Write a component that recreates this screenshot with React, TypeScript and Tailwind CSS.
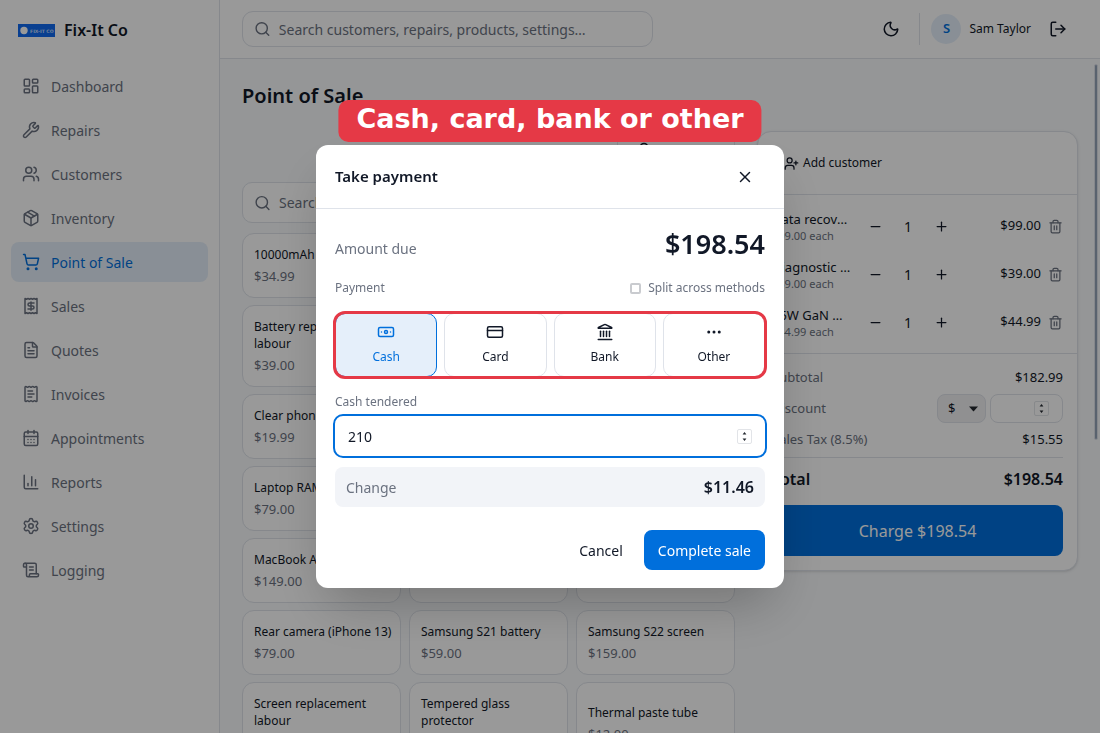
import React, { useState } from 'react';
import {
    Banknote,
    CalendarDays,
    ChartColumn,
    CreditCard,
    Ellipsis,
    FileText,
    Landmark,
    LayoutDashboard,
    Lock,
    LogOut,
    LucideIcon,
    Minus,
    Moon,
    Package,
    Plus,
    Receipt,
    ReceiptText,
    ScrollText,
    Search,
    Settings,
    ShoppingCart,
    Trash2,
    UserPlus,
    Users,
    Wrench,
    X,
} from 'lucide-react';

interface NavItem {
    title: string;
    icon: LucideIcon;
}

interface Product {
    name: string;
    price: string;
}

const navItems: NavItem[] = [
    { title: 'Dashboard', icon: LayoutDashboard },
    { title: 'Repairs', icon: Wrench },
    { title: 'Customers', icon: Users },
    { title: 'Inventory', icon: Package },
    { title: 'Point of Sale', icon: ShoppingCart },
    { title: 'Sales', icon: Receipt },
    { title: 'Quotes', icon: FileText },
    { title: 'Invoices', icon: ReceiptText },
    { title: 'Appointments', icon: CalendarDays },
    { title: 'Reports', icon: ChartColumn },
    { title: 'Settings', icon: Settings },
    { title: 'Logging', icon: ScrollText },
];

const products: Product[] = [
    { name: '10000mAh bank', price: '$34.99' },
    { name: '20W charger', price: '$19.99' },
    { name: '65W charger', price: '$44.99' },
    { name: 'Battery replacement labour', price: '$39.00' },
    { name: 'Bluetooth earbuds', price: '$49.00' },
    { name: 'Charge port', price: '$29.00' },
    { name: 'Clear phone case', price: '$19.99' },
    { name: 'Data recovery', price: '$99.00' },
    { name: 'Diagnostic fee', price: '$39.00' },
    { name: 'Laptop RAM 16GB', price: '$79.00' },
    { name: 'Laptop SSD 1TB', price: '$109.00' },
    { name: 'Lightning cable', price: '$14.99' },
    { name: 'MacBook Air battery', price: '$149.00' },
    { name: 'Pixel 7 screen', price: '$129.00' },
    { name: 'Pixel battery', price: '$59.00' },
    { name: 'Rear camera (iPhone 13)', price: '$79.00' },
    { name: 'Samsung S21 battery', price: '$59.00' },
    { name: 'Samsung S22 screen', price: '$159.00' },
    { name: 'Screen replacement labour', price: '$59.00' },
    { name: 'Tempered glass protector', price: '$14.99' },
    { name: 'Thermal paste tube', price: '$12.00' },
];

const cartItems: Product[] = [
    { name: 'Data recovery', price: '$99.00' },
    { name: 'Diagnostic fee', price: '$39.00' },
    { name: '65W GaN USB-C charger', price: '$44.99' },
];

const methods: NavItem[] = [
    { title: 'Cash', icon: Banknote },
    { title: 'Card', icon: CreditCard },
    { title: 'Bank', icon: Landmark },
    { title: 'Other', icon: Ellipsis },
];

const Stepper: React.FC = () => (
    <span className="flex h-[15px] w-[15px] shrink-0 items-center justify-center rounded-[2px] border border-[#e2e4e8]">
        <svg width="5" height="11" viewBox="0 0 5 11" fill="#23282f" aria-hidden="true">
            <path d="M2.5 1 4.4 3.4H.6ZM2.5 10 .6 7.6h3.8Z" />
        </svg>
    </span>
);

const Logo: React.FC = () => (
    <svg width="37" height="13" viewBox="0 0 37 13" role="img" aria-label="Fix-It Co logo">
        <rect width="37" height="13" fill="#0f6af0" />
        <circle cx="6" cy="6.5" r="3.7" fill="#fff" />
        <text x="12" y="8.5" fontSize="4.6" fontWeight="700" fill="#c4dcfd" fontFamily="DejaVu Sans, sans-serif">
            FIX-IT CO
        </text>
    </svg>
);

const Sidebar: React.FC = () => (
    <aside className="w-[220px] shrink-0 border-r border-[#dfe3ea] bg-white">
        <div className="flex h-[58px] items-center gap-[9px] px-[18px] pt-[2px]">
            <Logo />
            <span className="text-[16px] font-semibold">Fix-It Co</span>
        </div>
        <nav className="flex flex-col gap-1 px-[11px] pt-2">
            {navItems.map((item) => (
                <a
                    key={item.title}
                    href="#"
                    className={
                        item.title === 'Point of Sale'
                            ? 'flex h-10 items-center gap-[11px] rounded-lg bg-[#e5effa] px-[11px] text-[14px] text-[#006fdc]'
                            : 'flex h-10 items-center gap-[11px] rounded-lg px-[11px] text-[14px] text-[#6b7280]'
                    }
                >
                    <item.icon size={18} />
                    {item.title}
                </a>
            ))}
        </nav>
    </aside>
);

const Header: React.FC = () => (
    <header className="flex h-[59px] shrink-0 items-center justify-between border-b border-[#dfe3ea] bg-white px-[22px]">
        <label className="flex h-9 w-[411px] items-center gap-2 rounded-[11px] border border-[#dfe3ea] px-[11px] text-[#6b7280]">
            <Search size={18} />
            <input
                type="search"
                aria-label="Search everything"
                placeholder="Search customers, repairs, products, settings…"
                className="w-full bg-transparent text-[14px] outline-none placeholder:text-[#6b7280]"
            />
        </label>
        <div className="flex items-center">
            <button type="button" aria-label="Dark mode" className="px-[19px]">
                <Moon size={18} />
            </button>
            <div className="flex items-center gap-2 border-l border-[#dfe3ea] py-[1px] pl-[11px]">
                <span className="flex h-[30px] w-[30px] items-center justify-center rounded-full bg-[#e5effa] text-[13px] font-semibold text-[#006fdc]">
                    S
                </span>
                <span className="text-[12px]">Sam Taylor</span>
            </div>
            <button type="button" aria-label="Sign out" className="pr-[11px] pl-[18px]">
                <LogOut size={18} />
            </button>
        </div>
    </header>
);

const Cart: React.FC = () => (
    <section className="mt-[14px] w-[321px] shrink-0 self-start rounded-[14px] border border-[#dfe3ea] bg-white shadow-sm">
        <div className="flex h-[63px] items-center border-b border-[#dfe3ea] px-[14px]">
            <button type="button" className="flex items-center gap-1 px-3 text-[12px]">
                <UserPlus size={15} />
                Add customer
            </button>
        </div>
        <ul className="flex flex-col gap-2 border-b border-[#dfe3ea] px-[14px] py-[11px]">
            {cartItems.map((item) => (
                <li key={item.name} className="flex h-10 items-center">
                    <div className="w-[79px] pt-[2px]">
                        <p className="truncate text-[13px] leading-[17px]">{item.name}</p>
                        <p className="text-[11px] leading-4 text-[#6b7280]">{item.price} each</p>
                    </div>
                    <div className="ml-[9px] flex items-center">
                        <button type="button" aria-label={`Less ${item.name}`} className="flex w-[30px] justify-center">
                            <Minus size={15} />
                        </button>
                        <span className="w-9 text-center text-[14px]">1</span>
                        <button type="button" aria-label={`More ${item.name}`} className="flex w-[30px] justify-center">
                            <Plus size={15} />
                        </button>
                    </div>
                    <span className="ml-auto text-[13px]">{item.price}</span>
                    <button type="button" aria-label={`Remove ${item.name}`} className="ml-[7px] text-[#6b7280]">
                        <Trash2 size={15} />
                    </button>
                </li>
            ))}
        </ul>
        <div className="flex flex-col px-[14px] pt-[14px] pb-[14px] text-[13px]">
            <div className="flex h-5 items-center justify-between">
                <span className="text-[#6b7280]">Subtotal</span>
                <span>$182.99</span>
            </div>
            <div className="mt-[6px] mb-[7px] flex items-center gap-1">
                <label htmlFor="discount" className="mr-auto text-[#6b7280]">
                    Discount
                </label>
                <div className="relative">
                    <select
                        aria-label="Discount type"
                        className="h-[29px] w-[49px] appearance-none rounded-lg border border-[#dfe3ea] bg-[#f1f1f2] pl-[10px]"
                    >
                        <option>$</option>
                        <option>%</option>
                    </select>
                    <svg className="pointer-events-none absolute top-3 right-2" width="9" height="6" viewBox="0 0 9 6">
                        <path d="M0 .5h9L4.500 5.500Z" fill="#23282f" />
                    </svg>
                </div>
                <div className="flex h-[29px] w-[73px] items-center rounded-lg border border-[#dfe3ea] pr-[13px] pl-2">
                    <input id="discount" type="text" inputMode="decimal" className="w-full min-w-0 bg-transparent outline-none" />
                    <Stepper />
                </div>
            </div>
            <div className="flex h-5 items-center justify-between">
                <span className="text-[#6b7280]">Sales Tax (8.5%)</span>
                <span>$15.55</span>
            </div>
            <div className="mt-[7px] flex h-12 items-center justify-between border-t border-[#dfe3ea] pb-[6px] text-[16px] font-semibold">
                <span>Total</span>
                <span>$198.54</span>
            </div>
            <button type="button" className="h-[51px] rounded-lg bg-[#006fdc] text-[16px] text-white">
                Charge $198.54
            </button>
        </div>
    </section>
);

const PaymentDialog: React.FC = () => {
    const [method, setMethod] = useState('Cash');
    const [tendered, setTendered] = useState('210');

    return (
        <div className="fixed inset-0 flex items-center justify-center bg-black/40">
            <div
                role="dialog"
                aria-label="Take payment"
                className="relative w-[468px] rounded-xl bg-white shadow-2xl"
            >
                <div className="absolute -top-[45px] left-1/2 flex h-[42px] -translate-x-1/2 items-center rounded-[10px] bg-[#e53946] px-[18px] pb-1 font-['DejaVu_Sans',sans-serif] text-[27px] font-bold whitespace-nowrap text-white">
                    Cash, card, bank or other
                </div>
                <div className="flex h-16 items-center justify-between border-b border-[#dfe3ea] px-[19px]">
                    <h2 className="text-[15px] font-semibold">Take payment</h2>
                    <button type="button" aria-label="Close" className="px-[11px]">
                        <X size={18} />
                    </button>
                </div>
                <div className="px-[19px] pt-[18px] pb-[18px]">
                    <div className="flex h-9 items-end justify-between">
                        <span className="text-[14px] leading-[28px] text-[#6b7280]">Amount due</span>
                        <span className="text-[27px] leading-[38px] font-semibold">$198.54</span>
                    </div>
                    <div className="mt-[15px] flex h-5 items-center justify-between text-[12px] text-[#6b7280]">
                        <span>Payment</span>
                        <label className="flex items-center gap-[7px]">
                            <input
                                type="checkbox"
                                className="h-[11px] w-[11px] appearance-none rounded-[2px] border-2 border-[#c9cbcf] checked:bg-[#006fdc]"
                            />
                            Split across methods
                        </label>
                    </div>
                    <div className="mt-[15px] grid grid-cols-4 gap-[7px] rounded-[10px] outline-[3px] -outline-offset-1 outline-[#e53946]">
                        {methods.map((item) => (
                            <button
                                key={item.title}
                                type="button"
                                onClick={() => setMethod(item.title)}
                                className={
                                    method === item.title
                                        ? 'flex h-16 flex-col items-center justify-center gap-[7px] rounded-[10px] border border-[#006fdc] bg-[#e5effa] pb-px text-[12px] leading-[18px] text-[#006fdc]'
                                        : 'flex h-16 flex-col items-center justify-center gap-[7px] rounded-[10px] border border-[#dfe3ea] pb-px text-[12px] leading-[18px]'
                                }
                            >
                                <item.icon size={18} />
                                {item.title}
                            </button>
                        ))}
                    </div>
                    <label htmlFor="tendered" className="mt-4 block text-[12px] leading-[18px] text-[#6b7280]">
                        Cash tendered
                    </label>
                    <div className="-mx-[2px] mt-[3px] flex h-11 items-center rounded-[10px] border-2 border-[#006fdc] px-[13px]">
                        <input
                            id="tendered"
                            type="text"
                            inputMode="decimal"
                            value={tendered}
                            onChange={(e) => setTendered(e.target.value)}
                            className="w-full bg-transparent text-[14px] outline-none"
                        />
                        <Stepper />
                    </div>
                    <div className="mt-[9px] flex h-10 items-center justify-between rounded-lg bg-[#f2f4f8] px-[11px]">
                        <span className="text-[14px] text-[#6b7280]">Change</span>
                        <span className="text-[16px] font-semibold">$11.46</span>
                    </div>
                    <div className="mt-[23px] flex h-10 justify-end gap-[7px] text-[14px]">
                        <button type="button" className="px-[14px]">
                            Cancel
                        </button>
                        <button type="button" className="rounded-lg bg-[#006fdc] px-[14px] text-white">
                            Complete sale
                        </button>
                    </div>
                </div>
            </div>
        </div>
    );
};

const App: React.FC = () => (
    <div className="flex h-screen overflow-hidden bg-[#f8fafc] font-['Noto_Sans',sans-serif] text-[#111827]">
        <Sidebar />
        <div className="relative flex min-w-0 flex-1 flex-col">
            <Header />
            <main className="flex-1 overflow-hidden px-[22px] pt-[22px]">
                <h1 className="h-9 text-[20px] leading-[30px] font-semibold">Point of Sale</h1>
                <div className="flex gap-[22px]">
                    <div className="min-w-0 flex-1 pt-[14px]">
                        <div className="flex justify-end">
                            <button
                                type="button"
                                className="flex h-10 w-[118px] items-center justify-center gap-2 rounded-lg border border-[#dfe3ea] text-[14px]"
                            >
                                <Lock size={18} />
                                Close till
                            </button>
                        </div>
                        <label className="mt-[11px] flex h-[41px] items-center gap-2 rounded-[10px] border border-[#dfe3ea] bg-white px-[11px] text-[#6b7280]">
                            <Search size={18} />
                            <input
                                type="search"
                                aria-label="Search products"
                                placeholder="Search products"
                                className="w-full bg-transparent text-[14px] outline-none placeholder:text-[#6b7280]"
                            />
                        </label>
                        <div className="mt-[10px] grid grid-cols-3 gap-x-2 gap-y-[7px]">
                            {products.map((product) => (
                                <button
                                    key={product.name}
                                    type="button"
                                    className="rounded-xl border border-[#dfe3ea] bg-white py-3 pr-[6px] pl-[11px] text-left"
                                >
                                    <span className="mb-1 block text-[12px] leading-[17px]">{product.name}</span>
                                    <span className="block text-[13px] leading-[18px] text-[#6b7280]">{product.price}</span>
                                </button>
                            ))}
                        </div>
                    </div>
                    <Cart />
                </div>
            </main>
            <div className="absolute top-16 right-[2px] h-[376px] w-1 rounded-full border border-[#dfe3ea] bg-[#94a3b8]" />
        </div>
        <PaymentDialog />
    </div>
);

export default App;
